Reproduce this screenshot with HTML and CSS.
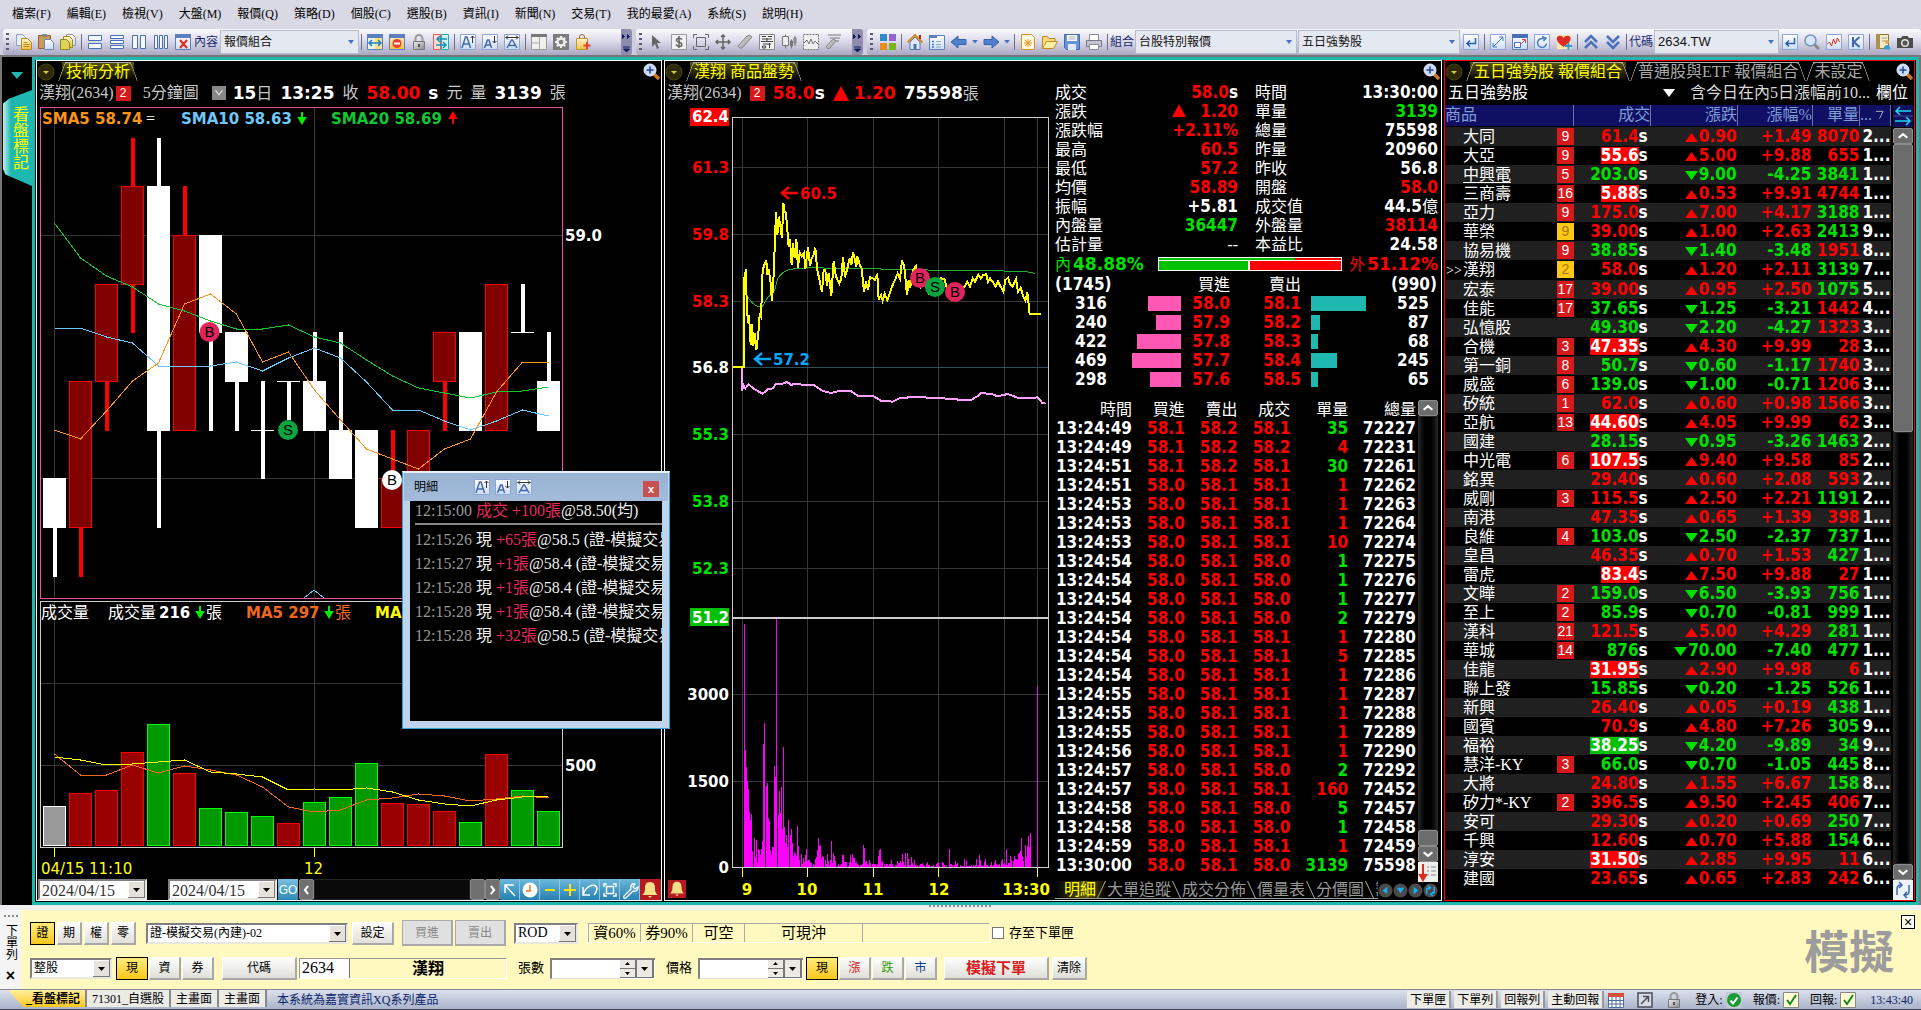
FILE: index.html
```html
<!DOCTYPE html>
<html lang="zh-Hant">
<head>
<meta charset="utf-8">
<title>看盤標記</title>
<link rel="stylesheet" href="styles.css">
</head>
<body>
<svg class="sprite" aria-hidden="true">
  <defs>
    <linearGradient id="gold" x1="0" y1="0" x2="0" y2="1"><stop offset="0" stop-color="#fff6cf"/><stop offset="1" stop-color="#efc044"/></linearGradient>
    <linearGradient id="tile" x1="0" y1="0" x2="0" y2="1"><stop offset="0" stop-color="#fff"/><stop offset="1" stop-color="#ccdcf5"/></linearGradient>
    <linearGradient id="grey" x1="0" y1="0" x2="1" y2="1"><stop offset="0" stop-color="#eee"/><stop offset="1" stop-color="#888"/></linearGradient>
  </defs>
  <symbol id="copy" viewBox="0 0 16 16"><path d="M.5.5h6l3 3v8h-9z" fill="#e6eefb" stroke="#8aa3cc"/><path d="M5.500 4.500h6l4 4v7h-10z" fill="url(#gold)" stroke="#b88a1c"/><path d="M7.500 8.500h4M7.500 10.500h6M7.500 12.500h6" stroke="#b88a1c"/></symbol>
  <symbol id="paste" viewBox="0 0 16 16"><path d="M.5 1.500h12v13h-12z" fill="#c99a5a" stroke="#8d622b"/><path d="M4 0h5v3H4z" fill="#888"/><path d="M6.500 5.500h6l3 3v7h-9z" fill="url(#tile)" stroke="#6d88b8"/></symbol>
  <symbol id="copies" viewBox="0 0 16 16"><path d="M6.500.5h6l3 3v8h-9z" fill="url(#tile)" stroke="#899"/><path d="M3.500 2.500h6l3 3v8h-9z" fill="url(#gold)" stroke="#a08a1c"/><path d="M.5 5.500h6l3 3v7h-9z" fill="#e0d25a" stroke="#8a8a1c"/></symbol>
  <symbol id="rows2" viewBox="0 0 16 16"><path d="M1.500 1.500h13v5h-13zM1.500 9.500h13v5h-13z" fill="#f4f8ff" stroke="#4a6fb5"/></symbol>
  <symbol id="rows3" viewBox="0 0 16 16"><path d="M1.500 1.500h13v3h-13zM1.500 6.500h13v3h-13zM1.500 11.500h13v3h-13z" fill="#f4f8ff" stroke="#4a6fb5"/></symbol>
  <symbol id="cols2" viewBox="0 0 16 16"><path d="M1.500 1.500h5v13h-5zM9.500 1.500h5v13h-5z" fill="#f4f8ff" stroke="#4a6fb5"/></symbol>
  <symbol id="cols3" viewBox="0 0 16 16"><path d="M1.500 1.500h3v13h-3zM6.500 1.500h3v13h-3zM11.500 1.500h3v13h-3z" fill="#f4f8ff" stroke="#4a6fb5"/></symbol>
  <symbol id="winx" viewBox="0 0 16 16"><path d="M.5.5h15v15h-15z" fill="url(#tile)" stroke="#5c7fc0"/><path d="M0 0h16v4H0z" fill="#5c7fc0"/><path d="M5 6l7 8M12 6l-7 8" stroke="#e02c1c" stroke-width="2"/></symbol>
  <symbol id="winlr" viewBox="0 0 16 16"><path d="M.5.5h15v15h-15z" fill="#e8f6e0" stroke="#5c7fc0"/><path d="M0 0h16v4H0z" fill="#5c7fc0"/><path d="M8 4h7v11H8z" fill="#ffe08a"/><path d="M2 9h12M5 6L2 9l3 3M11 6l3 3-3 3" stroke="#1c7fc4" fill="none" stroke-width="1.500"/></symbol>
  <symbol id="winno" viewBox="0 0 16 16"><path d="M.5.5h15v15h-15z" fill="url(#gold)" stroke="#5c7fc0"/><path d="M0 0h16v4H0z" fill="#5c7fc0"/><circle cx="8" cy="9.500" r="4.500" fill="#e8402c"/><path d="M5 9.500h6" stroke="#fff" stroke-width="2"/></symbol>
  <symbol id="lock" viewBox="0 0 16 16"><path d="M4.500 8V4.500a3.500 3.500 0 0 1 7 0V8" fill="none" stroke="#999" stroke-width="2"/><path d="M2.500 7.500h11v8h-11z" fill="url(#grey)" stroke="#777"/><path d="M7 10h2v3H7z" fill="#555"/></symbol>
  <symbol id="swap" viewBox="0 0 16 16"><path d="M.5.5h7v15h-7z" fill="#ffd9d2" stroke="#e06050"/><path d="M8.500.5h7v15h-7z" fill="#ccf4f6" stroke="#20aab8"/><path d="M14 5H4M7 2L4 5l3 3M3 11h10M10 8l3 3-3 3" stroke="#1a90b8" fill="none" stroke-width="1.500"/></symbol>
  <symbol id="aup" viewBox="0 0 16 16"><path d="M.5.5h15v15h-15z" fill="url(#tile)" stroke="#8ba6d8"/><path d="M2 14L5.500 3h1.500L10.500 14M3.500 10h5.500" stroke="#4468ac" fill="none" stroke-width="1.500"/><path d="M12.500 9V2M10.500 4l2-2 2 2" stroke="#333" fill="none"/></symbol>
  <symbol id="adown" viewBox="0 0 16 16"><path d="M.5.5h15v15h-15z" fill="url(#tile)" stroke="#8ba6d8"/><path d="M2.500 14L5.500 6h1.500L9.500 14M4 11h4.500" stroke="#4468ac" fill="none" stroke-width="1.500"/><path d="M12.500 2v7M10.500 7l2 2 2-2" stroke="#333" fill="none"/></symbol>
  <symbol id="awide" viewBox="0 0 16 16"><path d="M.5.5h15v15h-15z" fill="url(#tile)" stroke="#8ba6d8"/><path d="M3 14L7.500 6h1L13 14M5 11.500h6" stroke="#4468ac" fill="none" stroke-width="1.500"/><path d="M1.500 3.500h13M4 1.500l-2 2 2 2M12 1.500l2 2-2 2" stroke="#333" fill="none"/></symbol>
  <symbol id="layout" viewBox="0 0 16 16"><path d="M.5.5h15v15h-15z" fill="#f0f0f0" stroke="#999"/><path d="M0 0h16v3H0z" fill="#777"/><path d="M8.500 3v12M8.500 9H1" stroke="#aaa"/></symbol>
  <symbol id="gear" viewBox="0 0 16 16"><path d="M0 0h16v16H0z" fill="#7c7c7c"/><circle cx="8" cy="8" r="3.500" fill="none" stroke="#eee" stroke-width="2.500"/><path d="M8 2v2.500M8 11.500V14M2 8h2.500M11.500 8H14M3.800 3.800l1.700 1.700M10.500 10.500l1.700 1.700M12.200 3.800l-1.700 1.700M5.500 10.500l-1.700 1.700" stroke="#eee" stroke-width="2"/></symbol>
  <symbol id="bag" viewBox="0 0 16 16"><path d="M4.500 5V3a2.500 2.500 0 0 1 5 0v2" fill="none" stroke="#a0681c"/><path d="M1.500 4.500h11v11h-11z" fill="url(#gold)" stroke="#c89430"/><path d="M12 8v7M8.500 11.500h7" stroke="#e8402c" stroke-width="2"/></symbol>
  <symbol id="cursor" viewBox="0 0 16 16"><path d="M3 1v12l3-3 2 5 2-1-2-5h4z" fill="#666"/></symbol>
  <symbol id="dollar" viewBox="0 0 16 16"><path d="M.5.5h15v15h-15z" fill="#f0f0f0" stroke="#999"/><path d="M11 5.500C10 4 6 3.500 5.500 6S11 8 11 10.500 6 13 5 10.500M8 2v12" stroke="#666" fill="none" stroke-width="1.500"/></symbol>
  <symbol id="frame" viewBox="0 0 16 16"><path d="M.5 4V.5H4M12 .5h3.500V4M15.500 12v3.500H12M4 15.500H.5V12M3.500 3.500h9v9h-9z" fill="none" stroke="#666"/></symbol>
  <symbol id="move" viewBox="0 0 16 16"><path d="M8 1v14M1 8h14M6 3l2-2 2 2M6 13l2 2 2-2M3 6L1 8l2 2M13 6l2 2-2 2" fill="none" stroke="#666" stroke-width="1.500"/></symbol>
  <symbol id="eraser" viewBox="0 0 16 16"><path d="M1 12l9-10q3-2 5 1l-9 10q-3 3-5-1z" fill="url(#grey)" stroke="#888"/></symbol>
  <symbol id="chips" viewBox="0 0 16 16"><path d="M.5.5h15v15h-15z" fill="#f0f0f0" stroke="#888"/><path d="M3 2.500h4M9 2.500h4M3 5h10M8 4v4M2 7.500h12M4 10h8M3.500 12h3v2h-3zM10.500 9v5" stroke="#444" fill="none"/></symbol>
  <symbol id="candle" viewBox="0 0 16 16"><path d="M1.500 2.500h6v9h-6zM4.500.5v2M4.500 11.500v3M10.500 5.500v9M9.500 7h2v5h-2zM14 2v10M13 4h2v5h-2z" stroke="#777" fill="#eee"/></symbol>
  <symbol id="wave" viewBox="0 0 16 16"><path d="M.5.5h15v15h-15z" fill="#f0f0f0" stroke="#777" stroke-dasharray="2 1"/><path d="M1 9l3-3 2 4 2-5 2 5 2-3 3 3" stroke="#777" fill="none"/></symbol>
  <symbol id="brush" viewBox="0 0 16 16"><path d="M3 1h13M5 4h10M7 7h7" stroke="#777"/><path d="M1 13l6-7q2-2 4 1l-6 7q-2 2-4-1z" fill="url(#grey)" stroke="#888"/></symbol>
  <symbol id="tiles" viewBox="0 0 16 16"><path d="M0 0h7v7H0z" fill="#2c8cc8"/><path d="M9 0h7v7H9z" fill="#9064cc"/><path d="M0 9h7v7H0z" fill="#e88c1c"/><path d="M9 9h7v7H9z" fill="#7cb41c"/></symbol>
  <symbol id="home" viewBox="0 0 16 16"><path d="M3 8v7.500h10V8L8 3z" fill="#dfe9fa" stroke="#5577b4"/><path d="M.5 8.500L8 1l7.500 7.500" fill="none" stroke="#d08c28" stroke-width="2"/><path d="M6.500 10h3v5.500h-3z" fill="#4a6fb5"/><path d="M12 1h2v4h-2z" fill="#b02c1c"/></symbol>
  <symbol id="catalog" viewBox="0 0 16 16"><path d="M.5 1.500h15v14H.5z" fill="url(#tile)" stroke="#5c7fc0"/><path d="M0 1h8v3H0z" fill="#5c7fc0"/><path d="M3 7.500h2M3 10.500h2M3 13h2" stroke="#3a7fd4" stroke-width="1.500"/><path d="M7 7.500h5M7 10.500h5M7 13h5" stroke="#8ab"/></symbol>
  <symbol id="back" viewBox="0 0 16 16"><path d="M0 8l7-6v3.500h8v5H7V14z" fill="#4f7fce" stroke="#3a62aa"/></symbol>
  <symbol id="fwd" viewBox="0 0 16 16"><path d="M16 8L9 2v3.500H1v5h8V14z" fill="#4f7fce" stroke="#3a62aa"/></symbol>
  <symbol id="newdoc" viewBox="0 0 16 16"><path d="M1.500.5h10l3 3v12h-13z" fill="#fff8dc" stroke="#d0952c"/><path d="M8 5v8M4 9h8M5 6l6 6M11 6l-6 6" stroke="#e8941c"/></symbol>
  <symbol id="folder" viewBox="0 0 16 16"><path d="M.5 14.500v-12h5l1.500 2h6v3" fill="#f8dc80" stroke="#c08a20"/><path d="M.5 14.500l4-7h11l-4 7z" fill="#fdeeaa" stroke="#c08a20"/></symbol>
  <symbol id="disk" viewBox="0 0 16 16"><path d="M.5.5h15v15h-13l-2-2z" fill="#6b92d4" stroke="#4468ac"/><path d="M3 1h10v6H3z" fill="#fff"/><path d="M4 10h8v6H4z" fill="#dde8fa"/><path d="M4.500 3h7M4.500 5h7" stroke="#9ab"/></symbol>
  <symbol id="printer" viewBox="0 0 16 16"><path d="M3.500 6V.5h9V6" fill="#fff" stroke="#889"/><path d="M.5 6.500h15v6H.5z" fill="#c4c4cc" stroke="#778"/><path d="M3.500 10.500h9v5h-9z" fill="#fff" stroke="#889"/></symbol>
  <symbol id="enter" viewBox="0 0 16 16"><path d="M.5.5h15v15h-15z" fill="url(#tile)" stroke="#8ba6d8"/><path d="M12.500 4v5.500H4M7 6.500l-3 3 3 3" fill="none" stroke="#2a5cac" stroke-width="1.500"/></symbol>
  <symbol id="diag" viewBox="0 0 16 16"><path d="M.5.5h15v15h-15z" fill="url(#tile)" stroke="#8ba6d8"/><path d="M3 13L13 3M9 3h4v4M3 9v4h4" fill="none" stroke="#4a7cc8"/></symbol>
  <symbol id="popout" viewBox="0 0 16 16"><path d="M.5.5h15v15h-15z" fill="url(#tile)" stroke="#5c7fc0"/><path d="M0 0h16v4H0z" fill="#4a6fb5"/><path d="M2.500 8.500h6v5h-6z" fill="#fff" stroke="#4a6fb5"/><path d="M9 10l4-4M10 5.500h3.500V9" stroke="#e8402c" fill="none"/></symbol>
  <symbol id="reload" viewBox="0 0 16 16"><path d="M.5.5h15v15h-15z" fill="url(#tile)" stroke="#8ba6d8"/><path d="M11.500 6a4.500 4.500 0 1 0 1 3.500M8 2.500l4 1.500-2.500 3" fill="none" stroke="#4a7cc8" stroke-width="1.500"/></symbol>
  <symbol id="heart" viewBox="0 0 16 16"><path d="M1 1h14v14H1z" fill="#fbe9b0"/><path d="M7.500 13C2 9 0 6 1 3.500S6 1 7.500 4c1.500-3 6-3 7-.5S13 9 7.500 13z" fill="#dc2c24"/><path d="M12.500 8.500v7M9 12h7" stroke="#2a9cd0" stroke-width="2"/></symbol>
  <symbol id="chevup" viewBox="0 0 16 16"><path d="M2 8l6-6 6 6M2 14l6-6 6 6" fill="none" stroke="#4a72bc" stroke-width="2.500"/></symbol>
  <symbol id="chevdn" viewBox="0 0 16 16"><path d="M2 2l6 6 6-6M2 8l6 6 6-6" fill="none" stroke="#4a72bc" stroke-width="2.500"/></symbol>
  <symbol id="search" viewBox="0 0 16 16"><path d="M10 10l5 5" stroke="#888" stroke-width="3"/><circle cx="6.500" cy="6.500" r="5.500" fill="#d8e8fc" stroke="#7a94bc" stroke-width="1.500"/></symbol>
  <symbol id="pulse" viewBox="0 0 16 16"><path d="M.5.5h15v15h-15z" fill="url(#tile)" stroke="#8ba6d8"/><path d="M1.500 10l2-2 2 4 2-7 2 5 2-6 2 4" stroke="#d82c1c" fill="none"/></symbol>
  <symbol id="kline" viewBox="0 0 16 16"><path d="M.5.5h15v15h-15z" fill="url(#tile)" stroke="#8ba6d8"/><path d="M5 3v10M11.500 3L6 8l5.500 5" stroke="#3f67b0" fill="none" stroke-width="2"/></symbol>
  <symbol id="book" viewBox="0 0 16 16"><path d="M1.500.5h12v14h-12z" fill="#f4ecc8" stroke="#8c7440"/><path d="M1 0h4v15H1z" fill="#b09050"/><path d="M7 4h5M7 7h4" stroke="#999"/><circle cx="12" cy="8" r="2" fill="#e8a850"/><path d="M8.500 15.500c0-6 7-6 7 0z" fill="#3f9cc4"/></symbol>
  <symbol id="camera" viewBox="0 0 16 16"><path d="M0 4h4l1.500-2h5L12 4h4v10H0z" fill="#4c4c4c"/><circle cx="8" cy="9" r="4" fill="#ddd"/><circle cx="8" cy="9" r="2.500" fill="#555"/></symbol>
  <symbol id="caret" viewBox="0 0 6 16"><path d="M0 6h6L3 9.500z" fill="#4a72bc"/></symbol>
  <symbol id="more" viewBox="0 0 11 26"><path d="M1.500 5.500l2 2-2 2zM6.500 5.500l2 2-2 2zM2 18h7M2.500 20h6l-3 3z" fill="#0f1c5c" stroke="#0f1c5c"/></symbol>
  <symbol id="magnifier" viewBox="0 0 18 18"><path d="M11 11l5 5" stroke="#d07820" stroke-width="3.500"/><circle cx="7" cy="7" r="6" fill="#c8dcfa" stroke="#e8f0ff"/><path d="M7 3.500v7M3.500 7h7" stroke="#24408c" stroke-width="1.500"/></symbol>
  <symbol id="orb" viewBox="0 0 18 18"><circle cx="9" cy="9" r="8" fill="#2c2808" stroke="#4c440c"/><path d="M6 8h6l-3 3z" fill="#d8cc40"/></symbol>
  <symbol id="bell" viewBox="0 0 20 20"><path d="M0 0h20v20H0z" fill="#b81820"/><path d="M10 2c4 0 5 3 5 6 0 4 1 5 2.500 7h-15C4 13 5 12 5 8c0-3 1-6 5-6z" fill="#f4e088"/><path d="M8 16h4l-2 2z" fill="#f4e088"/></symbol>
  <symbol id="ch-l" viewBox="0 0 16 16"><path d="M10 3L6 8l4 5" fill="none" stroke="#fff" stroke-width="2.500"/></symbol>
  <symbol id="ch-r" viewBox="0 0 16 16"><path d="M6 3l4 5-4 5" fill="none" stroke="#fff" stroke-width="2.500"/></symbol>
  <symbol id="ch-u" viewBox="0 0 16 16"><path d="M3 10l5-4 5 4" fill="none" stroke="#fff" stroke-width="2.500"/></symbol>
  <symbol id="ch-d" viewBox="0 0 16 16"><path d="M3 6l5 4 5-4" fill="none" stroke="#fff" stroke-width="2.500"/></symbol>
  <symbol id="thin-d" viewBox="0 0 16 16"><path d="M4 5l4 5 4-5" fill="none" stroke="#eee" stroke-width="1.200"/></symbol>
  <symbol id="t-arrow" viewBox="0 0 20 20"><path d="M15 16L5 5M5 13V5h9" fill="none" stroke="#fff" stroke-width="1.500"/></symbol>
  <symbol id="t-clock" viewBox="0 0 20 20"><circle cx="10" cy="10" r="7.500" fill="#fff"/><path d="M10 5v6H6" fill="none" stroke="#e87820" stroke-width="1.500"/></symbol>
  <symbol id="t-minus" viewBox="0 0 20 20"><path d="M5 10h10" stroke="#ffe100" stroke-width="2"/></symbol>
  <symbol id="t-plus" viewBox="0 0 20 20"><path d="M4 10h12M10 4v12" stroke="#ffe100" stroke-width="2"/></symbol>
  <symbol id="t-undo" viewBox="0 0 20 20"><path d="M3 7v8h7M3 15c3-10 12-12 14-7 0 3-1 5-3 7" fill="none" stroke="#fff" stroke-width="1.500"/></symbol>
  <symbol id="t-fit" viewBox="0 0 20 20"><path d="M4 7V4h3M13 4h3v3M16 13v3h-3M7 16H4v-3M6.500 6.500h7v7h-7z" fill="none" stroke="#fff" stroke-width="1.500"/></symbol>
  <symbol id="t-wrench" viewBox="0 0 20 20"><path d="M4 16l7-7c-1-3 1-6 4-5l-2 3 2 2 3-2c0 3-2 5-5 4l-7 7q-3 1-2-2z" fill="none" stroke="#fff" stroke-width="1.300"/></symbol>
  <symbol id="cycle" viewBox="0 0 20 20"><path d="M0 0h20v20H0z" fill="#eef2fb"/><path d="M4 15V9q0-4 4-4M6 2l3 3-3 3M16 5v6q0 4-4 4M14 12l-3 3 3 3" fill="none" stroke="#3c64b4" stroke-width="1.500"/></symbol>
  <symbol id="jump" viewBox="0 0 20 20"><path d="M0 0h20v20H0z" fill="#eee"/><path d="M5 2v14M2 13l3 5 3-5z" stroke="#dc2c1c" stroke-width="2" fill="#dc2c1c"/><path d="M9 5h2M13 5h5M9 9h2M13 9h5M9 13h2M13 13h5" stroke="#888"/></symbol>
  <symbol id="calendar" viewBox="0 0 16 16"><path d="M0 2h16v14H0z" fill="#fff"/><path d="M0 1h16v4H0z" fill="#d8503c"/><path d="M.5 5v10.500h15V5M4 5v11M8 5v11M12 5v11M0 8.500h16M0 12h16" fill="none" stroke="#4c6c94"/></symbol>
  <symbol id="launch" viewBox="0 0 16 16"><path d="M1 1h14v14H1z" fill="#d8dbe4" stroke="#4a4e5c" stroke-width="1.500"/><path d="M4 12l7-7M6 4.500h5.500V10" fill="none" stroke="#4a4e5c" stroke-width="1.500"/></symbol>
  <symbol id="okdot" viewBox="0 0 16 16"><path d="M0 0h16v16H0z" fill="#c4c9d8"/><circle cx="8" cy="8" r="7" fill="#1c9c34"/><path d="M4.500 8.500l2.500 3 4.500-6" fill="none" stroke="#fff" stroke-width="2"/></symbol>
  <symbol id="okbox" viewBox="0 0 16 16"><path d="M.5.5h15v15h-15z" fill="#fffdd4" stroke="#888"/><path d="M4 8l3 4 6-9" fill="none" stroke="#148c1c" stroke-width="2"/></symbol>
  <symbol id="lr" viewBox="0 0 20 22"><path d="M0 0h20v22H0z" fill="#10105e"/><path d="M18 6H3M7 2L3 6l4 4M2 16h15M13 12l4 4-4 4" fill="none" stroke="#19d8f0" stroke-width="1.500"/><path d="M0 11h20" stroke="#4a4a9c"/></symbol>
</svg>

<nav class="menu" id="menu" aria-label="主選單"></nav>

<div class="toolbars">
  <div class="toolbar" data-tools="copy paste copies | rows2 rows3 cols2 cols3 winx">
    <label class="tool-field"><span>內容</span><select class="flat w-content"><option>報價組合</option></select></label>
    <div class="tools" data-tools="| winlr winno lock swap | aup adown awide | layout gear bag"></div>
  </div>
  <div class="toolbar" data-tools="cursor dollar frame move eraser chips candle wave brush"></div>
  <div class="toolbar wide" data-tools="tiles | home catalog back caret fwd caret | newdoc folder disk printer |">
    <label class="tool-field"><span>組合</span><select class="flat w-group"><option>台股特別報價</option></select></label>
    <select class="flat w-group" aria-label="子組合"><option>五日強勢股</option></select>
    <div class="tools" data-tools="enter | diag popout reload heart | chevup chevdn |"></div>
    <label class="tool-field"><span>代碼</span><select class="flat w-code"><option>2634.TW</option></select></label>
    <div class="tools" data-tools="enter search pulse kline | book camera"></div>
  </div>
</div>

<main class="desk">
  <aside class="side">
    <svg class="side-caret" viewBox="0 0 12 8"><path d="M0 0h12L6 7z" fill="#1fb8b0"/></svg>
    <button class="side-tab">看盤標記</button>
  </aside>

  <div class="workspace">
    <section class="panel tech">
      <div class="tabbar"><svg class="orb"><use href="#orb"/></svg><button class="tab on">技術分析</button><button class="zoom" aria-label="放大"><svg><use href="#magnifier"/></svg></button></div>
      <div class="headline">
        <span class="dim">漢翔(2634)</span><span class="badge">2</span><span class="dim period">5分鐘圖</span>
        <button class="drop" aria-label="週期"><svg><use href="#thin-d"/></svg></button>
        <b>15<i>日</i></b><b>13:25</b><span class="dim">收</span><b class="up">58.00</b><b>s</b><span class="dim">元</span><span class="dim">量</span><b>3139</b><span class="dim">張</span>
      </div>
      <svg class="chart" id="kchart" viewBox="36 104 624 775"></svg>
      <div class="chart-bar">
        <select class="sunk date" aria-label="起日"><option>2024/04/15</option></select>
        <select class="sunk date" aria-label="迄日"><option>2024/04/15</option></select>
        <button class="go">GO</button>
        <div class="hscroll"><button aria-label="左"><svg><use href="#ch-l"/></svg></button><span class="track"></span><span class="thumb"></span><button aria-label="右"><svg><use href="#ch-r"/></svg></button></div>
        <div class="chart-tools" id="chart-tools"></div>
      </div>
    </section>

    <section class="panel quote">
      <div class="tabbar"><svg class="orb"><use href="#orb"/></svg><button class="tab on">漢翔 商品盤勢</button><button class="zoom" aria-label="放大"><svg><use href="#magnifier"/></svg></button></div>
      <div class="quote-body">
        <div class="trend">
          <div class="headline">
            <span class="dim">漢翔(2634)</span><span class="badge">2</span><b class="up">58.0<em>s</em></b>
            <svg class="tri" viewBox="0 0 16 15"><path d="M8 0l8 15H0z" fill="#f00"/></svg><b class="up">1.20</b><b>75598<i>張</i></b>
          </div>
          <div class="stack">
            <svg class="chart" id="trend" viewBox="664 104 386 796"></svg>
            <button class="alarm" aria-label="警示"><svg><use href="#bell"/></svg></button>
          </div>
        </div>
        <div class="detail">
          <table class="stats"><colgroup><col class="c-73"><col><col class="c-90"><col></colgroup><tbody id="stats"></tbody></table>
          <div class="ratio"><span class="down song">內</span><b class="down">48.88%</b>
            <div class="ratio-bar"><div class="thin"></div><div class="thick"></div></div>
            <span class="up song">外</span><b class="up">51.12%</b></div>
          <table class="depth"><colgroup><col class="c-52"><col class="c-74"><col class="c-49"><col class="c-71"><col class="c-70"><col></colgroup>
            <thead><tr><th colspan="2" class="tot">(1745)</th><th>買進</th><th>賣出</th><th colspan="2" class="tot end">(990)</th></tr></thead><tbody id="depth"></tbody></table>
          <div class="tick-wrap">
            <table class="ticks"><thead><tr><th>時間</th><th>買進</th><th>賣出</th><th>成交</th><th>單量</th><th>總量</th></tr></thead><tbody id="ticks"></tbody></table>
            <div class="vscroll tick-scroll"><button aria-label="上"><svg><use href="#ch-u"/></svg></button><span class="track"></span><span class="thumb short"></span><button aria-label="下"><svg><use href="#ch-d"/></svg></button><button class="plain" aria-label="最新"><svg><use href="#jump"/></svg></button></div>
          </div>
          <div class="foot-tabs"><button class="on">明細</button><button>大單追蹤</button><button>成交分佈</button><button>價量表</button><button>分價圖</button><button class="cut">籌碼</button>
            <span class="orbs"><svg viewBox="0 0 16 16"><circle cx="8" cy="8" r="7.500" fill="#4a4a4a"/><path d="M10 4L5 8l5 4z" fill="#19aef0"/></svg><svg viewBox="0 0 16 16"><circle cx="8" cy="8" r="7.500" fill="#4a4a4a"/><path d="M4 5h8l-4 6z" fill="#19aef0"/></svg><svg viewBox="0 0 16 16"><circle cx="8" cy="8" r="7.500" fill="#4a4a4a"/><path d="M6 4l5 4-5 4z" fill="#19aef0"/></svg><svg viewBox="0 0 16 16"><circle cx="8" cy="8" r="7.500" fill="#4a4a4a"/><path d="M4 12V6l3-1M5 3l3 2-2 2M12 4v6l-3 2M11 10l-3 2 3 2" fill="none" stroke="#19aef0" stroke-width="1.500"/></svg></span></div>
        </div>
      </div>
    </section>

    <section class="panel watch">
      <div class="tabbar"><svg class="orb"><use href="#orb"/></svg><button class="tab on">五日強勢股 報價組合</button><button class="tab">普通股與ETF 報價組合</button><button class="tab">未設定</button><button class="zoom" aria-label="放大"><svg><use href="#magnifier"/></svg></button></div>
      <div class="watch-head"><span>五日強勢股</span><svg viewBox="0 0 12 8"><path d="M0 0h12L6 8z" fill="#fff"/></svg><span class="dim">含今日在內5日漲幅前10...</span><span>欄位</span></div>
      <div class="watch-body">
        <table class="list"><colgroup><col class="c-112"><col class="c-17"><col class="c-77"><col class="c-87"><col class="c-75"><col class="c-47"><col></colgroup>
          <thead><tr><th colspan="2" class="l">商品</th><th>成交</th><th>漲跌</th><th>漲幅%</th><th>單量</th><th class="l">...<svg viewBox="0 0 10 10"><path d="M1 1h8L5 9" fill="none" stroke="#bbb"/></svg></th></tr></thead>
          <tbody id="watchlist"></tbody></table>
        <div class="vscroll"><svg class="lr"><use href="#lr"/></svg><button aria-label="上"><svg><use href="#ch-u"/></svg></button><span class="thumb long"></span><span class="track"></span><button aria-label="下"><svg><use href="#ch-d"/></svg></button><button class="plain" aria-label="更新"><svg><use href="#cycle"/></svg></button></div>
      </div>
    </section>

    <section class="popup" aria-label="明細">
      <header><span>明細</span><svg><use href="#aup"/></svg><svg><use href="#adown"/></svg><svg><use href="#awide"/></svg><button aria-label="關閉">x</button></header>
      <div class="popup-body">
        <p class="sum"><time>12:15:00</time> <em>成交 +100張</em>@58.50(均)</p>
        <p><time>12:15:26</time> 現 <em>+65張</em>@58.5 (證-模擬交易(內建)-02)</p>
        <p><time>12:15:27</time> 現 <em>+1張</em>@58.4 (證-模擬交易(內建)-02)</p>
        <p><time>12:15:28</time> 現 <em>+1張</em>@58.4 (證-模擬交易(內建)-02)</p>
        <p><time>12:15:28</time> 現 <em>+1張</em>@58.4 (證-模擬交易(內建)-02)</p>
        <p><time>12:15:28</time> 現 <em>+32張</em>@58.5 (證-模擬交易(內建)-02)</p>
      </div>
    </section>
  </div>
</main>

<div class="splitter"><span></span></div>

<section class="order">
  <div class="order-grip"><i></i><span>下單列</span><button aria-label="關閉">×</button></div>
  <form class="order-form" onsubmit="return false">
    <div class="line">
      <div class="set"><button class="key on">證</button><button class="key">期</button><button class="key">權</button><button class="key">零</button></div>
      <select class="sunk account" aria-label="帳號"><option>證-模擬交易(內建)-02</option></select>
      <button class="key setup">設定</button>
      <div class="set pair"><button class="key off">買進</button><button class="key off">賣出</button></div>
      <select class="sunk rod" aria-label="委託條件"><option>ROD</option></select>
      <div class="fields"><span class="f1">資60%</span><span class="f2">券90%</span><span class="f3">可空</span><span class="f4">可現沖</span><span class="f5"></span></div>
      <label class="tick"><input type="checkbox">存至下單匣</label>
    </div>
    <div class="line low">
      <select class="sunk lot" aria-label="股別"><option>整股</option></select>
      <div class="set"><button class="key on w32">現</button><button class="key w32">資</button><button class="key w32">券</button></div>
      <button class="key symbol">代碼</button>
      <div class="code"><input value="2634" aria-label="股票代碼"><output>漢翔</output></div>
      <label class="num"><span>張數</span><input class="sunk-in"></label><span class="spin"></span>
      <label class="num"><span>價格</span><input class="sunk-in"></label><span class="spin"></span>
      <div class="set"><button class="key on w32">現</button><button class="key w32 red">漲</button><button class="key w32 green">跌</button><button class="key w32 blue">市</button></div>
      <button class="key send">模擬下單</button><button class="key clear">清除</button>
    </div>
  </form>
  <strong class="mark">模擬</strong>
  <button class="shut" aria-label="關閉">×</button>
</section>

<footer class="status">
  <div class="pages"><button class="on">_看盤標記</button><button>71301_自選股</button><button>主畫面</button><button>主畫面</button></div>
  <span class="notice">本系統為嘉實資訊XQ系列產品</span>
  <div class="state"><button>下單匣</button><button>下單列</button><button>回報列</button><button>主動回報</button></div>
  <div class="lights"><svg><use href="#calendar"/></svg><svg><use href="#launch"/></svg><svg><use href="#lock"/></svg>
    <span>登入:<svg><use href="#okdot"/></svg></span><span>報價:<svg><use href="#okbox"/></svg></span><span>回報:<svg><use href="#okbox"/></svg></span><time>13:43:40</time></div>
</footer>
<script src="app.js"></script>
</body>
</html>
```
FILE: styles.css
```css
:root {
  --song: "Liberation Serif", "Noto Sans CJK TC", serif;
  --num: "DejaVu Sans", "Noto Sans CJK TC", sans-serif;
  --cond: "DejaVu Sans Condensed", "DejaVu Sans", "Noto Sans CJK TC", sans-serif;
  --teal: #1fb8b0;
  --up: #f00;
  --down: #00e000;
}
* { box-sizing: border-box; }
body {
  margin: 0;
  min-height: 100vh;
  display: flex;
  flex-direction: column;
  background: #f0f0f0;
  color: #000;
  font: 400 12px/16px var(--song);
}
button, select, input { margin: 0; padding: 0; border: 0; background: none; color: inherit; font: inherit; border-radius: 0; }
svg { display: block; }
.sprite { width: 0; height: 0; position: absolute; }
table { border-collapse: collapse; border-spacing: 0; table-layout: fixed; width: 100%; }
td, th { padding: 0; font-weight: inherit; white-space: nowrap; text-align: right; }
.up { color: var(--up); }
.down { color: var(--down); }

/* menu */
.menu { display: flex; gap: 16px; padding: 5px 12px 0; height: 29px; background: #d9d8e5; }
.menu a { color: #000; text-decoration: none; line-height: 18px; white-space: nowrap; }

/* toolbars */
.toolbars { display: flex; gap: 4px; padding-left: 3px; background: #cfcde0; border-bottom: 2px solid #777; height: 28px; }
.toolbar { display: flex; align-items: center; background: linear-gradient(#fafafd, #dddceb 45%, #a9a7c2); border-radius: 3px; overflow: hidden; }
.toolbar.wide { flex: 1; }
.tools { display: flex; align-items: center; }
.toolbar .icon { width: 16px; height: 16px; margin: 0 3px; flex: none; }
.toolbar .icon.caret { width: 6px; margin: 0 2px; }
.toolbar .icon svg { width: 100%; height: 100%; }
.grip { width: 3px; height: 18px; margin: 0 4px 0 3px; background: repeating-linear-gradient(#5a5a72 0 2px, transparent 2px 5px); }
.sep { width: 1px; height: 16px; margin: 0 2px; background: #6f6d8c; }
.more { width: 11px; height: 26px; background: #8f8dad; margin-left: auto; }
.toolbar:nth-child(1) { width: 629px; }
.toolbar:nth-child(2) { width: 227px; }
.tool-field { display: flex; align-items: center; color: #1a2a6c; white-space: nowrap; }
.flat { appearance: none; height: 24px; padding: 0 20px 0 3px; margin-left: 1px; color: #111; font-family: "Liberation Sans", "Noto Sans CJK TC", sans-serif; border: 1px solid #b4bccb; background: #e4e8f0 url("data:image/svg+xml,%3Csvg xmlns='http://www.w3.org/2000/svg' width='6' height='4'%3E%3Cpath d='M0 0h6L3 4z' fill='%234a72bc'/%3E%3C/svg%3E") no-repeat right 4px center; }
.w-content { width: 139px; margin-left: 2px; }
.w-group { width: 162px; }
.w-code { width: 125px; font-size: 13px; }

/* desk */
.desk { display: flex; background: #000; border-left: 2px solid #777; border-right: 2px solid #777; }
.side { width: 30px; padding-top: 15px; }
.side-caret { width: 12px; height: 8px; margin: 0 auto 10px; }
.side-tab { width: 29px; height: 96px; margin-left: 1px; padding: 0 5px 0 8px; background: linear-gradient(90deg, #c0f0ee, var(--teal) 8px); clip-path: polygon(0 14%, 20% 9%, 100% 0, 100% 100%, 8% 88%, 0 82%); color: #ff0; font: 400 16px/16px var(--song); writing-mode: vertical-rl; }
.workspace { position: relative; flex: 1; display: grid; grid-template-columns: 626fr 778fr 471fr; gap: 2px; padding: 0 1px 1px; border: 3px solid var(--teal); min-width: 0; }
.panel { border: 1px solid #fff; color: #fff; min-width: 0; display: flex; flex-direction: column; }
.panel.watch { border-color: var(--up); }
.tabbar { display: flex; align-items: flex-end; height: 21px; padding-bottom: 1px; }
.orb { width: 18px; height: 18px; margin-right: 3px; }
.tab { display: flex; height: 19px; font: 400 16px/19px var(--song); color: #a8a8a8; white-space: nowrap; background: linear-gradient(#aaa, #aaa) no-repeat 7px 0 / calc(100% - 14px) 1px; }
.tab::before, .tab::after { content: ""; width: 7px; border-top: 1px solid #aaa; }
.tab::before { transform: skewX(-20deg); transform-origin: bottom; border-left: 1px solid #aaa; border-top-left-radius: 4px; }
.tab::after { transform: skewX(20deg); transform-origin: bottom; border-right: 1px solid #aaa; border-top-right-radius: 4px; }
.tab.on { color: #ff0; background: linear-gradient(#aaa, #aaa) no-repeat 7px 0 / calc(100% - 14px) 1px, linear-gradient(#5c5400, #000) no-repeat 4px 0 / calc(100% - 8px) 100%; }
.zoom { margin-left: auto; width: 18px; height: 18px; }
.zoom svg { width: 18px; height: 18px; }
.headline { display: flex; align-items: center; gap: 8px; height: 22px; padding-left: 2px; font: 700 17px/22px var(--num); white-space: nowrap; }
.headline i, .headline .dim { font: 400 16px/22px var(--song); color: #c8c8c8; }
.headline em { color: #fff; font-style: normal; }
.badge { width: 15px; height: 15px; background: #d8191c; color: #fff; font: 400 12px/15px "Liberation Sans", sans-serif; text-align: center; }
.tech .badge { margin: 0 4px 0 -6px; }
.drop { width: 14px; height: 14px; background: #888; margin: 0 -1px 0 5px; }
.drop svg { width: 14px; height: 14px; }
.tri { width: 16px; height: 15px; margin-right: -3px; }
.chart { width: 100%; height: auto; }
.chart text { font: 700 15px var(--num); }
.chart .r { text-anchor: end; }
.chart .song { font: 400 16px var(--song); }
.chart .x { font: 400 15px var(--num); fill: #ff0; }
.chart .mk { font: 400 15px "Liberation Sans", sans-serif; text-anchor: middle; fill: #000; }
.chart .axis { font: 700 15px var(--num); fill: #ff0; text-anchor: middle; }
.chart polyline { fill: none; }

/* chart footer */
.chart-bar { display: flex; align-items: stretch; height: 21px; }
.sunk { appearance: none; border: 2px solid; border-color: #808080 #e8e8e0 #e8e8e0 #808080; padding: 0 20px 0 2px; color: #000; background: #fff url("data:image/svg+xml,%3Csvg xmlns='http://www.w3.org/2000/svg' width='17' height='17'%3E%3Cpath d='M0 0h17v17H0z' fill='%23777'/%3E%3Cpath d='M0 0h16v16H0z' fill='%23fff'/%3E%3Cpath d='M1 1h15v15H1z' fill='%23e4e2da'/%3E%3Cpath d='M5 7h7l-3.500 4z'/%3E%3C/svg%3E") no-repeat right 0 center; }
.date { width: 109px; margin: 0 21px 0 1px; color: #333; font: 400 16px/20px var(--song); }
.date + .date { margin: 0 1px 0 0; }
.go { width: 20px; background: linear-gradient(#7cc0e0, #2c88b8); color: #fff; font: 400 12px/20px "Liberation Sans", sans-serif; }
.hscroll { flex: 1; display: flex; margin-left: 1px; }
.hscroll button, .hscroll .thumb { width: 15px; background: #707070; border: 1px solid #888; border-radius: 2px; }
.hscroll svg { width: 13px; height: 16px; }
.track { flex: 1; background: linear-gradient(90deg, #222, #000 30% 70%, #222); border: 1px solid #222; }
.hscroll .track { background: #0a0a0a; }
.chart-tools { display: flex; }
.chart-tools button { width: 20px; height: 21px; background: linear-gradient(#6cb8dc, #2680b0); border-right: 1px solid #8cc8e4; }
.chart-tools button:last-child { width: 21px; background: #b81820; border: 0; }
.chart-tools svg { width: 20px; height: 20px; }

/* quote */
.quote-body { flex: 1; display: grid; grid-template-columns: 386fr 390fr; }
.stack { display: grid; }
.stack > * { grid-area: 1 / 1; }
.alarm { width: 18px; height: 18px; align-self: end; margin: 0 0 2px 3px; }
.alarm svg { width: 18px; height: 18px; }
.detail { display: flex; flex-direction: column; padding: 1px 3px 0 4px; font: 700 17px/19px var(--cond); min-width: 0; }
.detail td, .detail th { height: 19px; line-height: 19px; }
.song, .stats td:nth-child(odd), .detail th { font: 400 16px/19px var(--song); }
.stats td:nth-child(odd) { text-align: left; }
.stats td:nth-child(3) { padding-left: 17px; }
.stats i { font: 400 16px/19px var(--song); }
.stats svg { display: inline-block; width: 14px; height: 13px; margin-right: 14px; }
.c-73 { width: 73px; } .c-90 { width: 90px; } .c-52 { width: 52px; } .c-74 { width: 74px; } .c-49 { width: 49px; }
.c-71 { width: 71px; } .c-70 { width: 70px; } .c-112 { width: 112px; } .c-17 { width: 17px; } .c-77 { width: 77px; }
.c-87 { width: 87px; } .c-75 { width: 75px; } .c-47 { width: 47px; }
.ratio { display: flex; align-items: center; gap: 2px; height: 20px; white-space: nowrap; font-family: var(--num); }
.ratio-bar { flex: 1; margin: 0 5px 0 12px; height: 14px; border: 1px solid #fff; display: flex; flex-direction: column; }
.thin { height: 2px; background: linear-gradient(90deg, #00c000 75%, #f00 75%); }
.thick { flex: 1; border-top: 1px solid #fff; background: linear-gradient(90deg, #00c000 49%, #fff 49% 50%, #f00 50%); }
.detail .tot { font: 700 17px/20px var(--cond); height: 20px; text-align: left; }
.detail .tot.end { text-align: right; padding-right: 1px; }
.depth .bar { height: 15px; margin-left: auto; background: #ff58b4; }
.depth .bar.ask { margin: 0 0 0 10px; background: var(--teal); }
.depth td:last-child { padding-right: 9px; }
.tick-wrap { display: flex; justify-content: space-between; margin-top: 11px; }
.ticks { width: auto; flex: 1; }
.ticks th:nth-child(1) { width: 77px; }
.ticks th:nth-child(n+2) { width: 53px; }
.ticks th:nth-child(5) { width: 58px; }
.ticks th:nth-child(6) { width: 68px; }
.vscroll { width: 20px; display: flex; flex-direction: column; margin-left: 2px; }
.vscroll button, .vscroll .thumb { height: 16px; background: #6c6c6c; border: 1px solid #8c8c8c; border-radius: 2px; }
.vscroll .thumb.long { height: 288px; }
.vscroll svg { width: 18px; height: 14px; }
.vscroll .plain { height: 20px; border: 0; }
.vscroll .plain svg { width: 20px; height: 20px; }
.vscroll .lr { width: 20px; height: 22px; margin-bottom: 1px; }
.tick-scroll { margin-bottom: -7px; }
.foot-tabs { display: flex; align-items: center; margin-top: auto; height: 20px; overflow: hidden; }
.foot-tabs button { display: flex; font: 400 16px/18px var(--song); height: 18px; color: #999; white-space: nowrap; border-bottom: 1px solid #999; }
.foot-tabs button::after { content: ""; width: 1px; margin: 0 5px; background: #aaa; transform: skewX(25deg); }
.foot-tabs .on { color: #ff0; padding-left: 9px; background: linear-gradient(90deg, #000, #5c5400 60%, #000); }
.foot-tabs .on::after { transform: skewX(-25deg); }
.foot-tabs .cut { flex: 1; overflow: hidden; min-width: 0; }
.orbs { display: flex; flex: none; }
.orbs svg { width: 15px; height: 15px; }

/* watch list */
.watch-head { display: flex; align-items: center; height: 23px; padding: 0 6px 2px 3px; font: 400 16px/20px var(--song); white-space: nowrap; }
.watch-head svg { width: 12px; height: 8px; margin: 0 15px 0 auto; }
.watch-head .dim { color: #d8d8d8; margin-right: 6px; }
.watch-body { display: flex; flex: 1; }
.watch-body .vscroll { margin-right: 1px; }
.list { flex: 1; width: auto; align-self: flex-start; font: 700 17px/19px var(--cond); }
.list th { height: 21px; background: #0f0f64; color: #7f9cd4; font: 400 16px/20px var(--song); border-right: 1px solid #6c70a8; border-bottom: 1px solid #000; }
.list th.l { text-align: left; }
.list th svg { display: inline-block; width: 9px; height: 10px; margin-left: 3px; }
.list td { height: 19px; line-height: 19px; }
.list tbody tr:nth-child(odd) { background: #202020; }
.list td:nth-child(1) { font: 400 16px/19px var(--song); text-align: left; padding-left: 1px; }
.list td:nth-child(1) span { display: inline-block; width: 17px; font-size: 14px; }
.list td:nth-child(1) u { text-underline-offset: 2px; }
.list td:nth-child(3) { padding-right: 3px; }
.list td:nth-child(3) b { display: inline-block; height: 17px; line-height: 17px; }
.list td:nth-child(3) b.lim { color: #fff; background: var(--up); }
.list td:nth-child(3) b.lim.down { background: #00c000; }
.list td:nth-child(4), .list td:nth-child(5) { padding-right: 1px; }
.list td:nth-child(7) { text-align: left; padding-left: 3px; }
.list svg.d { display: inline-block; width: 13px; height: 9px; margin-right: 1px; }
.tag { height: 17px; background: #d8191c; color: #fff; font: 400 14px/17px "Liberation Sans", sans-serif; text-align: center; }
.tag.y { background: #ffc814; color: #a87818; }

/* floating detail window */
.popup { position: absolute; left: 367px; top: 411px; width: 268px; height: 258px; padding: 0 7px 7px; background: #bfd3ea; border: 1px solid #38a0d0; border-top: 2px solid #e8f0fa; display: flex; flex-direction: column; }
.popup header { display: flex; align-items: center; gap: 5px; height: 28px; margin: 0 -6px; padding: 0 9px 0 10px; background: linear-gradient(#98b2d2, #a4bcda); }
.popup header span { margin-right: 31px; }
.popup header svg { width: 16px; height: 16px; }
.popup header button { margin: 4px 0 0 auto; width: 16px; height: 16px; background: #c75050; color: #fff; font: 700 11px/14px "Liberation Sans", sans-serif; }
.popup-body { flex: 1; padding: 0 0 0 5px; background: #000; color: #eee; overflow: hidden; font: 400 16px/24px var(--song); }
.popup p { margin: 0; white-space: nowrap; overflow: hidden; }
.popup p.sum { height: 24px; line-height: 20px; border-bottom: 2px solid #888; margin-bottom: 3px; }
.popup time { color: #999; }
.popup em { color: #e8285c; font-style: normal; }

/* order entry */
.splitter { height: 5px; background: #efeff2; }
.splitter span { display: block; width: 63px; height: 2px; margin: 0 auto; background: repeating-linear-gradient(90deg, #888 0 2px, transparent 2px 4px); }
.order { flex: 1; display: flex; background: #fff9bf; border-bottom: 1px solid #889; }
.order-grip { width: 21px; display: flex; flex-direction: column; align-items: center; background: #f4f4f4; }
.order-grip i { width: 14px; height: 2px; margin: 5px 0 7px; background: repeating-linear-gradient(90deg, #888 0 2px, transparent 2px 4px); }
.order-grip span { writing-mode: vertical-rl; }
.order-grip button { margin-top: 8px; font: 700 16px/16px "Liberation Sans", sans-serif; }
.order-form { flex: 1; padding: 10px 0 0 9px; display: flex; flex-direction: column; gap: 9px; }
.line { display: flex; align-items: center; height: 26px; white-space: nowrap; }
.set { display: flex; gap: 2px; }
.low .set { gap: 1px; }
.key { width: 25px; height: 23px; background: linear-gradient(#fdfdfd, #e0dfd8); border: 1px solid #fff; border-right: 2px solid #a8a8a8; border-bottom: 2px solid #a8a8a8; text-align: center; }
.key.on { background: linear-gradient(#ffec7c, #f8c81c); border: 1px solid #000; }
.key.w32 { width: 32px; }
.key.off { width: 51px; height: 26px; background: #e0e0e0; color: #888; border-left-color: #aaa; border-top-color: #aaa; }
.key.setup { width: 42px; margin-left: 4px; }
.key.symbol { width: 75px; margin: 0 2px 0 8px; }
.key.send { width: 105px; margin: 0 3px 0 7px; color: #d81c1c; font-weight: 700; font-size: 15px; }
.key.clear { width: 35px; }
.account { width: 202px; height: 21px; margin-left: 10px; }
.pair { margin-left: 8px; }
.rod { width: 64px; height: 21px; margin: 0 9px 0 8px; font-size: 14px; }
.fields { display: flex; height: 20px; border: 1px solid #fff; border-top-color: #aaa; font-size: 15px; line-height: 18px; text-align: center; }
.fields span { border-left: 1px solid #aaa; }
.f1, .f2, .f3 { width: 52px; } .f4 { width: 118px; } .f5 { width: 127px; }
.tick { display: flex; align-items: center; gap: 5px; margin-left: 2px; font-size: 13px; }
.tick input { appearance: none; width: 12px; height: 12px; background: #fff; border: 1px solid #777; }
.lot { width: 82px; height: 21px; margin-right: 4px; }
.code { display: flex; width: 208px; height: 21px; border: 1px solid #999; border-right-color: #fff; border-bottom-color: #fff; }
.code input { width: 50px; padding-left: 2px; background: #fff; border-right: 1px solid #777; font-size: 16px; }
.code output { flex: 1; text-align: center; font: 700 16px/19px var(--song); }
.num { display: flex; align-items: center; gap: 6px; margin-left: 11px; font-size: 13px; }
.sunk-in { width: 70px; height: 21px; background: #fff; border: 2px solid #808080; border-right: 0; border-bottom: 1px solid #ddd; }
.spin { width: 35px; height: 21px; border-top: 2px solid #808080; background: #fff url("data:image/svg+xml,%3Csvg xmlns='http://www.w3.org/2000/svg' width='34' height='18'%3E%3Cpath d='M0 0h34v18H0z' fill='%23777'/%3E%3Cpath d='M0 0h15v8H0zM0 9h15v8H0zM17 0h15v17H17z' fill='%23eceae2'/%3E%3Cpath d='M5 5h5L7.500 2zM5 12h5l-2.500 3zM21 7h7l-3.500 4z'/%3E%3C/svg%3E") no-repeat; }
.spin:last-of-type { margin-right: 3px; }
.red { color: #d81c1c; } .green { color: #2c9c0c; } .blue { color: #0c3c8c; }
.mark { align-self: center; margin-right: 7px; color: #9c9c9c; font: 700 45px/48px "Noto Sans CJK TC", sans-serif; }
.shut { width: 14px; height: 14px; margin: 5px 6px 0 0; border: 1px solid #000; font: 400 14px/10px "Liberation Sans", sans-serif; background: #fffdf0; }

/* status bar */
.status { display: flex; align-items: center; height: 20px; background: linear-gradient(#dbe0ec, #a9b3ca); border-bottom: 1px solid #445; color: #000; white-space: nowrap; }
.pages { display: flex; padding-left: 8px; height: 19px; }
.pages button { background: #ecebe6; border-right: 2px solid #888; padding: 0 5px; height: 17px; }
.pages .on { padding-left: 18px; background: linear-gradient(#fff0a0, #ffc820); clip-path: polygon(0 0, 100% 0, 100% 100%, 20% 100%); font-weight: 700; }
.notice { margin-left: 10px; color: #0c246c; }
.state { display: flex; gap: 3px; margin-left: auto; }
.state button { background: #ecebe6; border-right: 2px solid #999; padding: 0 3px; height: 17px; }
.lights { display: flex; align-items: center; gap: 11px; padding: 0 8px 0 4px; }
.lights svg { width: 16px; height: 16px; }
.lights > svg { margin-right: 2px; }
.lights span { display: flex; align-items: center; gap: 3px; }
.lights time { color: #0c246c; margin-left: 3px; }
```
FILE: app.js
```js
const $ = id => document.getElementById(id);
const use = (id, cls = '') => `<svg class="${cls}"><use href="#${id}"/></svg>`;

/* menu and toolbars */
$('menu').innerHTML = '檔案(F) 編輯(E) 檢視(V) 大盤(M) 報價(Q) 策略(D) 個股(C) 選股(B) 資訊(I) 新聞(N) 交易(T) 我的最愛(A) 系統(S) 說明(H)'
  .split(' ').map(t => `<a href="#">${t}</a>`).join('');

const tools = list => list.split(' ').map(n => n === '|'
  ? '<span class="sep"></span>'
  : `<button class="icon ${n}" aria-label="${n}">${use(n)}</button>`).join('');

document.querySelectorAll('[data-tools]').forEach(el => {
  const bar = el.classList.contains('toolbar');
  el.insertAdjacentHTML('afterbegin', (bar ? '<span class="grip"></span>' : '') + tools(el.dataset.tools));
  if (bar && !el.classList.contains('wide')) el.insertAdjacentHTML('beforeend', use('more', 'more'));
});
$('chart-tools').innerHTML = ['t-arrow', 't-clock', 't-minus', 't-plus', 't-undo', 't-fit', 't-wrench', 'bell']
  .map(n => `<button aria-label="${n}">${use(n)}</button>`).join('');

/* drawing helpers */
const line = (x1, y1, x2, y2, c, w = 1) => `<path d="M${x1} ${y1}L${x2} ${y2}" stroke="${c}" stroke-width="${w}"/>`;
const rect = (x, y, w, h, f, s) => `<rect x="${x}" y="${y}" width="${w}" height="${h}" fill="${f}"${s ? ` stroke="${s}"` : ''}/>`;
const text = (x, y, t, f, c = '') => `<text x="${x}" y="${y}" fill="${f}" class="${c}">${t}</text>`;
const poly = (pts, c, w = 1) => `<polyline points="${pts.join(' ')}" stroke="${c}" stroke-width="${w}" shape-rendering="crispEdges"/>`;
const mark = (x, y, t, f) => `<circle cx="${x}" cy="${y}" r="10" fill="${f}"/>` + text(x, y + 5, t, '#000', 'mk');
const arrow = (x, y, c) => `<path d="M${x + 17} ${y}H${x + 2}M${x + 8} ${y - 6}L${x + 1} ${y}l7 6" fill="none" stroke="${c}" stroke-width="2.500"/>`;
const stem = (x, y, up, c) => up
  ? `<path d="M${x} ${y + 6}v-8M${x - 3} ${y}l3-5 3 5z" stroke="${c}" stroke-width="2" fill="${c}"/>`
  : `<path d="M${x} ${y - 6}v8M${x - 3} ${y}l3 5 3-5z" stroke="${c}" stroke-width="2" fill="${c}"/>`;

/* five-minute candles: [rising, bodyTop, bodyBottom, wickTop, wickBottom] */
const candles = [
  [0, 478, 528, 478, 577], [1, 381, 528, 381, 577], [1, 284, 382, 284, 431], [1, 186, 285, 138, 333],
  [0, 186, 431, 138, 528], [1, 235, 431, 186, 431], [0, 235, 333, 235, 431], [0, 332, 382, 332, 431],
  [0, 430, 431, 381, 479], [0, 381, 382, 381, 420], [0, 381, 431, 332, 431], [0, 430, 479, 332, 479],
  [0, 430, 528, 430, 528], [1, 478, 528, 430, 528], [1, 430, 528, 430, 528], [1, 332, 382, 332, 431],
  [0, 332, 431, 332, 431], [1, 284, 431, 284, 431], [0, 332, 333, 284, 333], [0, 381, 431, 332, 431]];
const step = i => 53.5 + 26 * i;
const series = ys => ys.map((y, i) => `${step(i)},${y}`);
const sma20 = [223, 258, 276, 287, 304, 311, 321, 329, 329, 325, 337, 343, 360, 376, 388, 393, 398, 392, 391, 387];
const sma10 = [328, 328, 337, 343, 366, 366, 366, 362, 371, 358, 348, 358, 382, 410, 410, 421, 430, 421, 410, 416];
const sma5 = [430, 439, 411, 381, 363, 304, 294, 314, 362, 352, 390, 420, 449, 459, 469, 449, 439, 392, 362, 362];
const vols = ['w806', 'r793', 'r790', 'r752', 'g724', 'r773', 'g808', 'g812', 'g816', 'r823', 'g802', 'g797', 'g763', 'r803', 'r804', 'r811', 'g822', 'r754', 'g790', 'g811'];
const vma5 = [754, 775, 775, 765, 773, 766, 770, 775, 787, 807, 812, 810, 800, 798, 794, 796, 801, 799, 796, 798];
const vma10 = [757, 760, 765, 764, 762, 760, 772, 774, 777, 790, 789, 790, 788, 792, 800, 804, 806, 800, 797, 796];
const volFill = { w: ['#999', '#fff'], r: ['#900', '#f00'], g: ['#090', '#0f0'] };

let k = rect(39.5, 107.5, 522, 491, 'none', '#f0509c') + rect(39.5, 601.5, 522, 246, 'none', '#ccc');
for (const x of [53.5, 313.5]) k += line(x, 108, x, 598, '#383838') + line(x, 602, x, 847, '#383838') + line(x, 848, x, 857, '#ff0');
for (const y of [235.5, 478.5, 683.5, 765.5]) k += line(40, y, 561, y, '#383838');
candles.forEach(([up, t, b, wt, wb], i) => {
  const x = 42 + 26 * i, h = Math.max(b - t, 1);
  k += rect(x + 10, wt, 4, wb - wt, up ? '#f00' : '#fff');
  k += up ? rect(x + .5, t + .5, 22, h - 1, '#800000', '#f00') : rect(x, t, 23, h, '#fff');
});
k += poly(series(sma20), '#10c830') + poly(series(sma10), '#6cc8f8') + poly(series(sma5), '#f89418') + poly(['303,598', '313,590', '323,598'], '#6cc8f8');
k += mark(208.5, 332, 'B', '#e0245c') + mark(287, 430, 'S', '#0ca43c') + mark(391, 480, 'B', '#fff');
vols.forEach((v, i) => {
  const [f, s] = volFill[v[0]], y = +v.slice(1);
  k += rect(42.5 + 26 * i, y + .5, 22, 845 - y, f, s);
});
k += poly(series(vma5), '#f06820') + poly(series(vma10), '#ff0');
k += text(41, 124, 'SMA5 58.74', '#f89418') + text(145, 124, '=', '#fff', 'song')
  + text(180, 124, 'SMA10 58.63', '#6cc8f8') + stem(301, 118, 0, '#0e0')
  + text(330, 124, 'SMA20 58.69', '#10c830') + stem(452, 118, 1, '#f00')
  + text(564, 241, '59.0', '#fff') + text(564, 771, '500', '#fff')
  + text(40, 618, '成交量', '#fff', 'song') + text(107, 618, '成交量', '#fff', 'song') + text(158, 618, '216', '#fff') + stem(199, 612, 0, '#0e0') + text(205, 618, '張', '#fff', 'song')
  + text(245, 618, 'MA5 297', '#f06820') + stem(328, 612, 0, '#0e0') + text(334, 618, '張', '#f06820', 'song') + text(374, 618, 'MA', '#ff0')
  + text(40, 874, '04/15 11:10', '', 'x') + text(303, 874, '12', '', 'x');
$('kchart').innerHTML = k;

/* intraday trend; samples are stored at three units per pixel */
const unpack = s => s.trim().split(/\s+/).map(p => { const [x, y] = p.split(','); return `${725 + x / 3},${190 + y / 3}`; });
const price = unpack(`20,531 53,531 55,264 60,238 62,340 66,400 69,375 74,465 78,402 82,468 86,430 91,480 97,430 101,375 105,382 110,240 115,225 121,212 124,255 128,238 133,270 138,332 143,255 150,65 154,135 158,80 163,108 168,144 172,38 176,66 180,70 184,120 188,170 192,148 197,226 201,160 206,205 211,147 216,235 221,187 227,198 234,188 238,237 246,172 252,228 257,206 262,196 268,173 273,235 280,268 288,305 293,240 298,240 303,288 308,250 316,318 323,212 328,250 333,268 340,280 346,265 351,200 357,262 364,235 371,205 376,225 381,186 386,205 391,230 394,198 401,225 407,235 414,306 420,275 426,300 432,262 440,265 446,270 454,255 458,330 465,315 470,332 476,312 484,330 493,305 500,285 507,270 515,250 522,265 528,212 535,230 543,316 548,270 553,292 561,240 570,228 576,262 584,290 592,275 600,290 608,308 618,285 630,270 645,265 656,268 664,300 672,290 684,305 696,300 707,300 716,290 724,275 732,290 740,265 747,275 757,255 764,265 772,255 781,253 786,275 792,265 800,275 808,290 816,275 824,290 832,305 838,270 846,263 852,282 860,290 865,278 870,268 876,305 884,293 892,320 898,332 904,308 911,372 944,372`);
const average = unpack('55,290 60,312 68,325 80,340 95,350 108,352 125,322 138,312 148,295 155,265 170,248 190,238 240,234 290,233 300,235 450,236 480,238 590,239 620,241 820,242 850,244 900,245 927,250');
const index = unpack('48,531 48,603 52,585 58,595 68,583 80,594 95,603 110,611 125,598 140,595 150,582 165,583 183,576 195,584 215,582 240,586 265,586 290,603 315,609 345,602 372,602 395,617 440,617 465,632 500,635 520,625 560,621 640,624 700,629 735,630 755,618 765,610 795,611 815,619 845,612 875,623 905,625 935,622 950,640 958,638');
const bursts = [
  [743, '243 117 100 86 78 55 47 53 16 0 29 10 27 5 18 17 12 18 26 123 144 0 81 84 49 46 17 12 20 20 101 90 248 0 52 76 54 80 38 120 40 24 32 20 47 0 32 38 24 11 15 13 11 41 21 7 0 13 3 9 5 12 18 6 7 7 5 4 0 3 2 8 10 17 29 22 21 8 11 10 0 7 3 13 6 2 7 26 4 14 11 6 0 1 3 1 2 3 12 12 5 5 5 0 1 5 12 4 13 9 9 4 5 3 2 0 2 2 3 22 19 5 6 3 2 7 4 0 3 3 3 3 1'],
  [876, '3 11 17 18 5 6 0 3 1 3 3 1 3 3 7 3 1 0 2 2 6 4 4 6 4 13 5 2 14 0 14 8 2 2 10 4 2 7 2 1 2 0 2 3 3 4 2 1 0 3 5 2 2 0 1 1 2 0 0 3 4 5 1 0 0 5 4 2 0 2'],
  [948, '18 3 3 2 0 2 6 3 4 0 0 2 1 1 1 8 0 6 1 1 1 1 2 0 2 1 2'],
  [975, '8 0 2 12 7 2 1 1 5 8 2 2 1 0 2 5 1 2 4 7 3 2 2 3 0 6 8 3 4 2'],
  [1005, '18 2 4 4 11 7 0 6 11 8 8 7 13 14 16 29 11 6 0 22 10 21 31 20 34'],
  [1036, '181']];
let t = '';
for (const x of [741.5, 806.5, 872.5, 937.5, 1003.5, 1036.5]) t += line(x, 118, x, 867, '#383838');
for (const x of [741.5, 806.5, 872.5, 937.5, 1036.5]) t += line(x, 868, x, 877, '#ff0');
for (const y of [167.5, 234.5, 301.5, 434.5, 501.5, 568.5, 694.5, 781.5]) t += line(732, y, 1047, y, '#383838');
t += line(732, 367.5, 1047, 367.5, '#2c5058') + rect(731.5, 117.5, 316, 750, 'none', '#ccc') + line(732, 618, 1047, 618, '#ccc', 2);
t += '<g shape-rendering="crispEdges">';
for (const [start, data] of bursts) data.split(' ').forEach((h, i) => { if (+h) t += rect(start + i, 867 - h, 1, h, '#f0f'); });
t += '</g>';
t += poly(average, '#20b030') + poly(index, '#ffa0ff', 2) + poly(price, '#ff0', 2);
t += rect(689, 108, 39, 18, '#f00') + rect(689, 608, 39, 18, '#00c000');
[[122, '62.4', '#fff'], [173, '61.3', '#f00'], [240, '59.8', '#f00'], [307, '58.3', '#f00'], [373, '56.8', '#fff'], [440, '55.3', '#00e000'],
  [507, '53.8', '#00e000'], [574, '52.3', '#00e000'], [623, '51.2', '#fff'], [700, '3000', '#fff'], [787, '1500', '#fff'], [873, '0', '#fff']]
  .forEach(([y, s, c]) => { t += text(728, y, s, c, 'r'); });
t += arrow(780, 193, '#f00') + text(799, 199, '60.5', '#f00') + arrow(753, 359, '#00a8ff') + text(772, 365, '57.2', '#00a8ff');
t += mark(919, 278, 'B', '#e0245c') + mark(934, 287, 'S', '#0ca43c') + mark(954, 292, 'B', '#e0245c');
[[746, '9'], [806, '10'], [872, '11'], [938, '12'], [1025, '13:30']].forEach(([x, s]) => { t += text(x, 895, s, '', 'axis'); });
$('trend').innerHTML = t;

/* quote statistics */
const tri = '<svg viewBox="0 0 14 13"><path d="M7 0l7 13H0z" fill="#f00"/></svg>';
$('stats').innerHTML = [
  ['成交', '<span class="up">58.0</span>s', '', '時間', '13:30:00', ''], ['漲跌', tri + '1.20', 'up', '單量', '3139', 'down'],
  ['漲跌幅', '+2.11%', 'up', '總量', '75598', ''], ['最高', '60.5', 'up', '昨量', '20960', ''], ['最低', '57.2', 'up', '昨收', '56.8', ''],
  ['均價', '58.89', 'up', '開盤', '58.0', 'up'], ['振幅', '+5.81', '', '成交值', '44.5<i>億</i>', ''],
  ['內盤量', '36447', 'down', '外盤量', '38114', 'up'], ['估計量', '<i>--</i>', '', '本益比', '24.58', '']]
  .map(([a, b, bc, c, d, dc]) => `<tr><td>${a}</td><td class="${bc}">${b}</td><td>${c}</td><td class="${dc}">${d}</td></tr>`).join('');

$('depth').innerHTML = [[316, 33, '58.0', '58.1', 55, 525], [240, 25, '57.9', '58.2', 9, 87], [422, 44, '57.8', '58.3', 7, 68], [469, 49, '57.7', '58.4', 26, 245], [298, 31, '57.6', '58.5', 7, 65]]
  .map(([q, w, b, a, v, n]) => `<tr><td>${q}</td><td><div class="bar" style="width:${w}px"></div></td><td class="up">${b}</td><td class="up">${a}</td><td><div class="bar ask" style="width:${v}px"></div></td><td>${n}</td></tr>`).join('');

$('ticks').innerHTML = `24:49 58.1 58.2 58.1 35 72227|24:49 58.1 58.2 58.2 4 72231|24:51 58.1 58.2 58.1 30 72261|24:51 58.0 58.1 58.1 1 72262|24:53 58.0 58.1 58.1 1 72263|24:53 58.0 58.1 58.1 1 72264|24:53 58.0 58.1 58.1 10 72274|24:54 58.0 58.1 58.0 1 72275|24:54 58.0 58.1 58.0 1 72276|24:54 58.0 58.1 58.0 1 72277|24:54 58.0 58.1 58.0 2 72279|24:54 58.0 58.1 58.1 1 72280|24:54 58.0 58.1 58.1 5 72285|24:54 58.0 58.1 58.1 1 72286|24:55 58.0 58.1 58.1 1 72287|24:55 58.0 58.1 58.1 1 72288|24:55 58.0 58.1 58.1 1 72289|24:56 58.0 58.1 58.1 1 72290|24:57 58.0 58.1 58.0 2 72292|24:57 58.0 58.1 58.1 160 72452|24:58 58.0 58.1 58.0 5 72457|24:58 58.0 58.1 58.0 1 72458|24:59 58.0 58.1 58.1 1 72459|30:00 58.0 58.1 58.0 3139 75598`
  .split('|').map(r => {
    const [time, bid, ask, deal, qty, sum] = r.split(' ');
    return `<tr><td>13:${time}</td><td class="up">${bid}</td><td class="up">${ask}</td><td class="up">${deal}</td><td class="${deal === bid ? 'down' : 'up'}">${qty}</td><td>${sum}</td></tr>`;
  }).join('');

/* watch list: name, badge, price (* = limit), change, percent, size and its colour, leading digit of the total */
$('watchlist').innerHTML = `大同 9 61.4 0.90 +1.49 8070r 2|大亞 9 *55.6 5.00 +9.88 655r 1|中興電 5 203.0 9.00 -4.25 3841g 1|三商壽 16 *5.88 0.53 +9.91 4744r 1|亞力 9 175.0 7.00 +4.17 3188g 1|華榮 9y 39.00 1.00 +2.63 2413g 9|協易機 9 38.85 1.40 -3.48 1951r 8|漢翔 2y 58.0 1.20 +2.11 3139g 7|宏泰 17 39.00 0.95 +2.50 1075g 5|佳能 17 37.65 1.25 -3.21 1442r 4|弘憶股 - 49.30 2.20 -4.27 1323r 3|合機 3 *47.35 4.30 +9.99 28r 3|第一銅 8 50.7 0.60 -1.17 1740r 3|威盛 6 139.0 1.00 -0.71 1206r 3|矽統 1 62.0 0.60 +0.98 1566r 3|亞航 13 *44.60 4.05 +9.99 62r 3|國建 - 28.15 0.95 -3.26 1463g 2|中光電 6 *107.5 9.40 +9.58 85r 2|銘異 - 29.40 0.60 +2.08 593r 2|威剛 3 115.5 2.50 +2.21 1191g 2|南港 - 47.35 0.65 +1.39 398r 1|良維 4 103.0 2.50 -2.37 737g 1|皇昌 - 46.35 0.70 +1.53 427g 1|雷虎 - *83.4 7.50 +9.88 27r 1|文曄 2 159.0 6.50 -3.93 756g 1|至上 2 85.9 0.70 -0.81 999g 1|漢科 21 121.5 5.00 +4.29 281g 1|華城 14 876 70.00 -7.40 477g 1|佳龍 - *31.95 2.90 +9.98 6r 1|聯上發 - 15.85 0.20 -1.25 526g 1|新興 - 26.40 0.05 +0.19 438g 1|國賓 - 70.9 4.80 +7.26 305g 9|福裕 - *38.25 4.20 -9.89 34g 9|慧洋-KY 3 66.0 0.70 -1.05 445g 8|大將 - 24.80 1.55 +6.67 158g 8|矽力*-KY 2 396.5 9.50 +2.45 406r 7|安可 - 29.30 0.20 +0.69 250g 7|千興 - 12.60 0.70 +5.88 154g 6|淳安 - *31.50 2.85 +9.95 11r 6|建國 - 23.65 0.65 +2.83 242r 6`
  .split('|').map(r => {
    const [name, tag, p, chg, pct, size, head] = r.split(' ');
    const dir = pct[0] === '+' ? 'up' : 'down';
    const lim = p[0] === '*' ? 'lim' : '';
    const shape = dir === 'up' ? '<path d="M6.500 0L13 9H0z" fill="#f00"/>' : '<path d="M0 0h13L6.500 9z" fill="#00e000"/>';
    const label = name === '中興電' ? `<u>${name}</u>` : name;
    const badge = tag === '-' ? '' : `<div class="tag ${tag.includes('y') ? 'y' : ''}">${parseInt(tag)}</div>`;
    return `<tr><td><span>${name === '漢翔' ? '&gt;&gt;' : ''}</span>${label}</td><td>${badge}</td><td><b class="${dir} ${lim}">${p.replace('*', '')}</b>s</td>`
      + `<td class="${dir}"><svg class="d" viewBox="0 0 13 9">${shape}</svg>${chg}</td><td class="${dir}">${pct}</td>`
      + `<td class="${size.endsWith('r') ? 'up' : 'down'}">${size.slice(0, -1)}</td><td>${head}...</td></tr>`;
  }).join('');
```
